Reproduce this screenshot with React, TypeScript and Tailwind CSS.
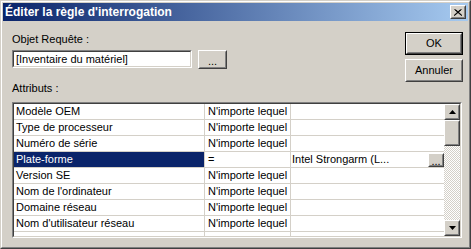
import React from "react";

const rows: [string, string, string][] = [
  ["Modèle OEM", "N'importe lequel", ""],
  ["Type de processeur", "N'importe lequel", ""],
  ["Numéro de série", "N'importe lequel", ""],
  ["Plate-forme", "=", "Intel Strongarm (L..."],
  ["Version SE", "N'importe lequel", ""],
  ["Nom de l'ordinateur", "N'importe lequel", ""],
  ["Domaine réseau", "N'importe lequel", ""],
  ["Nom d'utilisateur réseau", "N'importe lequel", ""],
];

function Raised({ className = "", children }: { className?: string; children?: React.ReactNode }) {
  return (
    <div className={"border border-t-white border-l-white border-r-[#404040] border-b-[#404040] bg-[#d4d0c8] " + className}>
      <div className="w-full h-full border border-t-[#d4d0c8] border-l-[#d4d0c8] border-r-[#808080] border-b-[#808080] flex items-center justify-center">
        {children}
      </div>
    </div>
  );
}

function Arrow({ up }: { up?: boolean }) {
  return (
    <svg width="7" height="4" viewBox="0 0 7 4">
      {up ? <polygon points="3.5,0 7,4 0,4" fill="#000" /> : <polygon points="0,0 7,0 3.5,4" fill="#000" />}
    </svg>
  );
}

export default function App() {
  return (
    <div className="w-[471px] h-[249px] font-['Liberation_Sans',Arial,sans-serif] text-[11px] text-black select-none">
      <div className="w-full h-full border border-t-[#d4d0c8] border-l-[#d4d0c8] border-r-[#404040] border-b-[#404040]">
        <div className="w-full h-full border border-t-white border-l-white border-r-[#808080] border-b-[#808080] bg-[#d4d0c8] p-[1px] flex flex-col">
          {/* caption */}
          <div className="h-[18px] flex items-center justify-between bg-[linear-gradient(to_right,#0a246a,#a6caf0)] pl-[2px] pr-[2px]">
            <span className="text-white font-bold text-[12px] leading-[14px]">Éditer la règle d'interrogation</span>
            <Raised className="w-[16px] h-[14px]">
              <svg width="8" height="7" viewBox="0 0 8 7">
                <path d="M0.5 0.5 L7.5 6.5 M7.5 0.5 L0.5 6.5 M1.5 0.5 L8 6.5 M6.5 0.5 L0 6.5" stroke="#000" strokeWidth="1" />
              </svg>
            </Raised>
          </div>
          {/* body */}
          <div className="flex-1 flex flex-col pl-[9px] pr-[5px] leading-[13px]">
            <div className="flex justify-between mt-[11px]">
              <div className="flex flex-col pt-[1px]">
                <span>Objet Requête :</span>
                <div className="flex mt-[4px] gap-[6px]">
                  <div className="w-[180px] h-[18px] border border-t-[#808080] border-l-[#808080] border-r-white border-b-white">
                    <div className="w-full h-full border border-t-[#404040] border-l-[#404040] border-r-[#d4d0c8] border-b-[#d4d0c8] bg-white flex items-center pl-[2px]">
                      [Inventaire du matériel]
                    </div>
                  </div>
                  <Raised className="w-[29px] h-[19px]">
                    <span className="leading-[10px] pt-[2px]">...</span>
                  </Raised>
                </div>
              </div>
              <div className="flex flex-col gap-[4px]">
                <div className="w-[58px] h-[23px] border border-black">
                  <Raised className="w-full h-full">
                    <span>OK</span>
                  </Raised>
                </div>
                <Raised className="w-[58px] h-[23px]">
                  <span>Annuler</span>
                </Raised>
              </div>
            </div>
            <span className="mt-0">Attributs :</span>
            {/* grid */}
            <div className="mt-[7px] w-[450px] h-[136px] border border-t-[#808080] border-l-[#808080] border-r-white border-b-white">
              <div className="w-full h-full border border-t-[#404040] border-l-[#404040] border-r-[#d4d0c8] border-b-[#d4d0c8] bg-white flex overflow-hidden">
                <div className="flex-1 flex flex-col">
                  {rows.map(([a, b, c], i) => {
                    const sel = i === 3;
                    return (
                      <div key={i} className="flex h-[16px] shrink-0 border-b border-b-[#d4d0c8]">
                        <div className={"w-[191px] shrink-0 border-r border-r-[#d4d0c8] pl-[2px] flex items-center whitespace-nowrap " + (sel ? "bg-[#0a246a] text-white" : "")}>
                          {a}
                        </div>
                        <div className="w-[86px] shrink-0 border-r border-r-[#d4d0c8] pl-[3px] flex items-center whitespace-nowrap">{b}</div>
                        <div className="flex-1 flex items-center justify-between pl-[1px] whitespace-nowrap">
                          <span>{c}</span>
                          {sel && (
                            <Raised className="w-[16px] h-[14px]">
                              <span className="leading-[8px] pt-[2px]">...</span>
                            </Raised>
                          )}
                        </div>
                      </div>
                    );
                  })}
                  <div className="flex flex-1">
                    <div className="w-[191px] shrink-0 border-r border-r-[#d4d0c8]" />
                    <div className="w-[86px] shrink-0 border-r border-r-[#d4d0c8]" />
                    <div className="flex-1" />
                  </div>
                </div>
                {/* scrollbar */}
                <div className="w-[16px] shrink-0 flex flex-col">
                  <Raised className="w-[16px] h-[16px] shrink-0">
                    <Arrow up />
                  </Raised>
                  <Raised className="w-[16px] h-[26px] shrink-0" />
                  <div className="flex-1 bg-[repeating-conic-gradient(#ffffff_0%_25%,#d4d0c8_0%_50%)] bg-[length:2px_2px]" />
                  <Raised className="w-[16px] h-[16px] shrink-0">
                    <Arrow />
                  </Raised>
                </div>
              </div>
            </div>
          </div>
        </div>
      </div>
    </div>
  );
}
